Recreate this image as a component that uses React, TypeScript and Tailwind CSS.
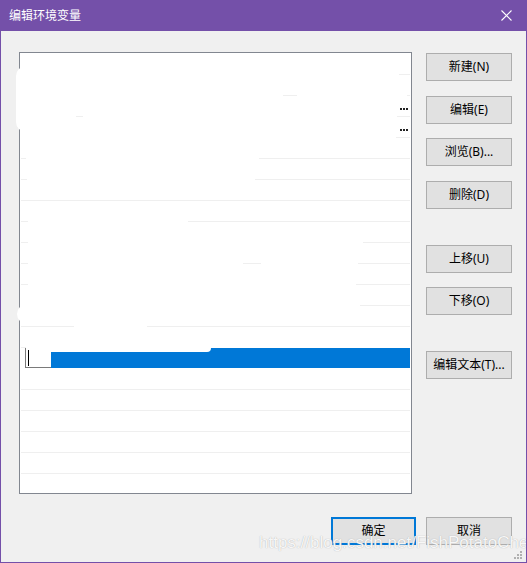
import React from "react";

// visible pieces of each separator line, in x offsets inside the list (list inner starts at x=20)
const rowLines: [number, number][][] = [
  [[379, 389]],
  [[263, 276], [387, 389]],
  [[56, 62], [377, 389]],
  [[376, 389]],
  [[1, 5], [239, 389]],
  [[1, 6], [235, 389]],
  [[1, 389]],
  [[1, 7], [168, 389]],
  [[1, 7], [343, 389]],
  [[1, 7], [223, 240], [338, 389]],
  [[1, 7], [336, 389]],
  [[340, 389]],
  [[1, 53], [127, 389]],
  [[1, 5]],
];

const font = { fontFamily: '"Segoe UI", "Noto Sans", "Noto Sans CJK SC", sans-serif' };

function WinButton({
  label,
  className = "",
  primary = false,
}: {
  label: string;
  className?: string;
  primary?: boolean;
}) {
  return (
    <div
      className={
        "flex h-[28px] items-center justify-center bg-[#e1e1e1] text-[12px] text-black " +
        (primary ? "border-2 border-[#0078d7] " : "border border-[#adadad] ") +
        className
      }
    >
      {label}
    </div>
  );
}

function Dots() {
  return (
    <span className="flex gap-[1px]">
      <span className="h-[2px] w-[2px] bg-[#222]" />
      <span className="h-[2px] w-[2px] bg-[#222]" />
      <span className="h-[2px] w-[2px] bg-[#222]" />
    </span>
  );
}

export default function App() {
  return (
    <div
      className="relative flex h-[563px] w-[527px] flex-col overflow-hidden border border-t-0 border-[#7450a9] bg-[#f0f0f0]"
      style={font}
    >
      {/* title bar */}
      <div className="-mx-[1px] flex h-[31px] shrink-0 items-center justify-between bg-[#7450a9] pl-[9px] pr-[15px]">
        <span className="text-[12px] text-white">编辑环境变量</span>
        <svg width="11" height="11" viewBox="0 0 11 11" className="mt-[-1px]">
          <path d="M0.5 0.5 L10.5 10.5 M10.5 0.5 L0.5 10.5" stroke="white" strokeWidth="1.1" />
        </svg>
      </div>

      <div className="flex flex-1 flex-col">
        <div className="flex pl-[18px] pt-[21px]">
          {/* list */}
          <div className="relative h-[442px] w-[393px] overflow-hidden border border-[#828790] bg-white pt-[1px]">
            {rowLines.map((segs, i) => (
              <div key={i} className="relative h-[21px]">
                {segs.map(([a, b], j) => (
                  <div
                    key={j}
                    className="absolute bottom-0 h-[1px] bg-[#efefef]"
                    style={{ left: a, width: b - a + 1 }}
                  />
                ))}
                {(i === 2 || i === 3) && (
                  <div className="absolute right-[3px] top-[12px]">
                    <Dots />
                  </div>
                )}
              </div>
            ))}
            {/* selected row in edit mode */}
            <div className="relative mr-[1px] flex h-[21px]">
              <div className="ml-[5px] flex h-[20px] w-[26px] items-center border-b border-l border-[#7a7a7a] bg-white pl-[2px]">
                <div className="h-[16px] w-[1px] bg-black" />
              </div>
              <div className="h-[20px] flex-1 bg-[#0078d7]" />
              <div className="absolute left-[31px] top-0 h-[4px] w-[160px] rounded-br-[40px] bg-white" />
            </div>
            {Array.from({ length: 6 }).map((_, i) => (
              <div key={i} className="mx-[1px] h-[21px] border-b border-[#efefef]" />
            ))}
          </div>

          {/* buttons */}
          <div className="ml-[14px] flex w-[86px] flex-col">
            <WinButton label="新建(N)" className="mt-[1px]" />
            <WinButton label="编辑(E)" className="mt-[15px]" />
            <WinButton label="浏览(B)..." className="mt-[14px]" />
            <WinButton label="删除(D)" className="mt-[15px]" />
            <WinButton label="上移(U)" className="mt-[36px]" />
            <WinButton label="下移(O)" className="mt-[14px]" />
            <WinButton label="编辑文本(T)..." className="mt-[36px]" />
          </div>
        </div>

        <div className="mt-[23px] flex justify-end gap-[10px] pr-[14px]">
          <WinButton label="确定" primary className="w-[85px]" />
          <WinButton label="取消" className="w-[86px]" />
        </div>
      </div>

      {/* redaction blobs */}
      <div className="absolute left-[15px] top-[66px] h-[66px] w-[12px] rounded-l-[10px] bg-white" />
      <div className="absolute left-[16px] top-[304px] h-[20px] w-[14px] rounded-l-[10px] bg-white" />

      {/* watermark */}
      <div
        className="absolute left-[258px] top-[533px] text-[17px] leading-[20px] text-white/90 [text-shadow:0_0_1px_#a0a0a0]"
        style={{ fontFamily: '"Liberation Sans", Arial, sans-serif' }}
      >
        https://blog.csdn.net/FishPotatoChen
      </div>

      {/* resize grip */}
      <svg width="8" height="8" viewBox="0 0 8 8" className="absolute bottom-[3px] right-[4px]">
        <rect x="6" y="0" width="2" height="2" fill="#b0b0b0" />
        <rect x="3" y="3" width="2" height="2" fill="#b0b0b0" />
        <rect x="6" y="3" width="2" height="2" fill="#b0b0b0" />
        <rect x="0" y="6" width="2" height="2" fill="#b0b0b0" />
        <rect x="3" y="6" width="2" height="2" fill="#b0b0b0" />
        <rect x="6" y="6" width="2" height="2" fill="#b0b0b0" />
      </svg>
    </div>
  );
}
